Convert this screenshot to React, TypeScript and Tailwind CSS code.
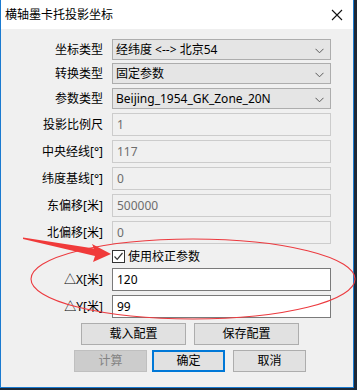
import React from "react";

const font = "font-['Noto_Sans','Noto_Sans_CJK_SC',sans-serif]";

const Chevron = () => (
  <svg width="9" height="6" viewBox="0 0 9 6" className="absolute right-[6px] top-[8px]">
    <path d="M0.5 0.8 L4.5 4.8 L8.5 0.8" fill="none" stroke="#5a5a5a" strokeWidth="1" />
  </svg>
);

const Label = ({ children }: { children: React.ReactNode }) => (
  <div className="w-[103px] pr-[1px] text-right text-[12px] leading-[16px] text-black">{children}</div>
);

const SelectRow = ({ label, value, mt }: { label: string; value: string; mt: string }) => (
  <div className={`flex items-center gap-[8px] ${mt}`}>
    <Label>{label}</Label>
    <div className="relative flex h-[21px] w-[219px] items-center border border-[#adadad] bg-[#e5e5e5] pl-[3px] text-[12px] leading-[16px] text-black">
      {value}
      <Chevron />
    </div>
  </div>
);

const InputRow = ({ label, value, disabled, mt }: { label: string; value: string; disabled?: boolean; mt: string }) => (
  <div className={`flex items-center gap-[8px] ${mt}`}>
    <Label>{label}</Label>
    <div
      className={
        disabled
          ? "flex h-[23px] w-[219px] items-center border border-[#cccccc] bg-[#f0f0f0] pl-[4px] text-[12px] leading-[16px] text-[#6d6d6d]"
          : "flex h-[23px] w-[219px] items-center border border-[#7a7a7a] bg-white pl-[4px] text-[12px] leading-[16px] text-black"
      }
    >
      {value}
    </div>
  </div>
);

export default function App() {
  return (
    <div className={`relative h-[390px] w-[357px] overflow-hidden bg-[#1d2836] ${font}`}>
      <div className="flex h-[388px] w-[354px] flex-col border-x border-b border-[#1a7ad0] bg-[#f0f0f0]">
        <div className="flex h-[29px] items-center justify-between bg-white pl-[4px] pr-[8px]">
          <span className="text-[12px] leading-[16px] text-black">横轴墨卡托投影坐标</span>
          <svg width="12" height="12" viewBox="0 0 12 12" className="mr-[2px]">
            <path d="M1 1 L11 11 M11 1 L1 11" stroke="#111" strokeWidth="1.1" />
          </svg>
        </div>

        <SelectRow label="坐标类型" value="经纬度 <--> 北京54" mt="mt-[10px]" />
        <SelectRow label="转换类型" value="固定参数" mt="mt-[3px]" />
        <SelectRow label="参数类型" value="Beijing_1954_GK_Zone_20N" mt="mt-[4px]" />

        <InputRow label="投影比例尺" value="1" disabled mt="mt-[4px]" />
        <InputRow label="中央经线[°]" value="117" disabled mt="mt-[4px]" />
        <InputRow label="纬度基线[°]" value="0" disabled mt="mt-[4px]" />
        <InputRow label="东偏移[米]" value="500000" disabled mt="mt-[4px]" />
        <InputRow label="北偏移[米]" value="0" disabled mt="mt-[4px]" />

        <div className="mt-[6px] flex h-[13px] items-center pl-[111px]">
          <div className="flex h-[13px] w-[13px] items-center justify-center border border-[#333333] bg-white">
            <svg width="11" height="11" viewBox="0 0 11 11">
              <path d="M1.5 5.5 L4.2 8.3 L9.5 2" fill="none" stroke="#333" strokeWidth="1.2" />
            </svg>
          </div>
          <span className="ml-[3px] text-[12px] leading-[16px] text-black">使用校正参数</span>
        </div>

        <InputRow label="△X[米]" value="120" mt="mt-[5px]" />
        <InputRow label="△Y[米]" value="99" mt="mt-[4px]" />

        <div className="mt-[5px] flex gap-[8px] pl-[80px]">
          <button className="h-[22px] w-[105px] border border-[#adadad] bg-[#e1e1e1] text-[12px] leading-[16px] text-black">载入配置</button>
          <button className="h-[22px] w-[105px] border border-[#adadad] bg-[#e1e1e1] text-[12px] leading-[16px] text-black">保存配置</button>
        </div>
        <div className="mt-[5px] flex pl-[73px]">
          <button className="h-[22px] w-[73px] border border-[#bfbfbf] bg-[#cccccc] text-[12px] leading-[16px] text-[#838383]">计算</button>
          <button className="ml-[5px] h-[22px] w-[73px] border-2 border-[#0078d7] bg-[#e1e1e1] text-[12px] leading-[16px] text-black">确定</button>
          <button className="ml-[8px] h-[22px] w-[73px] border border-[#adadad] bg-[#e1e1e1] text-[12px] leading-[16px] text-black">取消</button>
        </div>
      </div>

      <svg width="357" height="390" className="pointer-events-none absolute left-0 top-0">
        <ellipse cx="193" cy="279" rx="162" ry="40" fill="none" stroke="#ec3a3f" strokeWidth="1.1" />
        <polygon
          points="23,237.5 94,248.5 92,244 111,254 93,262 95,256 23,239"
          fill="#f03a3a"
        />
      </svg>
    </div>
  );
}
